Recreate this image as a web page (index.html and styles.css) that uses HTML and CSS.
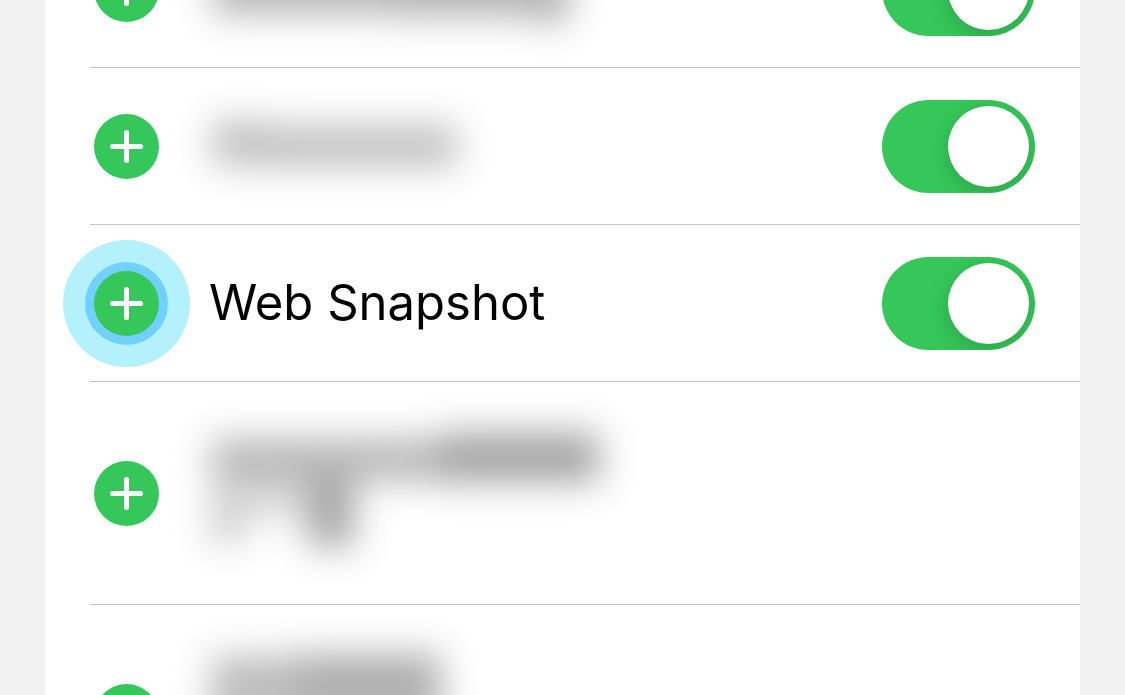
FILE: index.html
```
<!DOCTYPE html>
<html lang="en">
<head>
<meta charset="utf-8">
<meta name="viewport" content="width=device-width, initial-scale=1">
<title>Web Snapshot</title>
<link rel="stylesheet" href="styles.css">
</head>
<body>
<main class="panel">
  <ul class="list">
    <li class="row">
      <button class="add" type="button" aria-label="Add"><svg viewBox="0 0 65 65" aria-hidden="true"><path d="M18.500 32.500H46.500M32.500 18.500V46.500"/></svg></button>
      <div class="label">
        <svg class="redacted" width="420" height="66" aria-hidden="true">
          <rect x="3" y="10" width="180" height="48" fill="#b4b4b4"/>
          <rect x="182" y="8" width="178" height="52" fill="#b2b2b2"/>
          <rect x="325" y="8" width="34" height="58" fill="#aeaeae"/>
        </svg>
      </div>
      <input class="switch" type="checkbox" checked aria-label="Enabled">
    </li>
    <li class="row">
      <button class="add" type="button" aria-label="Add"><svg viewBox="0 0 65 65" aria-hidden="true"><path d="M18.500 32.500H46.500M32.500 18.500V46.500"/></svg></button>
      <div class="label">
        <svg class="redacted" width="420" height="66" aria-hidden="true">
          <rect x="3" y="8" width="52" height="44" fill="#bebebe"/>
          <rect x="54" y="12" width="194" height="42" fill="#c0c0c0"/>
        </svg>
      </div>
      <input class="switch" type="checkbox" checked aria-label="Enabled">
    </li>
    <li class="row">
      <button class="add add-highlight" type="button" aria-label="Add Web Snapshot"><svg viewBox="0 0 65 65" aria-hidden="true"><path d="M18.500 32.500H46.500M32.500 18.500V46.500"/></svg></button>
      <label class="label" for="web-snapshot">Web Snapshot</label>
      <input class="switch" id="web-snapshot" type="checkbox" checked>
    </li>
    <li class="row row-tall">
      <button class="add" type="button" aria-label="Add"><svg viewBox="0 0 65 65" aria-hidden="true"><path d="M18.500 32.500H46.500M32.500 18.500V46.500"/></svg></button>
      <div class="label">
        <svg class="redacted" width="420" height="132" aria-hidden="true">
          <rect x="2" y="12" width="229" height="42" fill="#b6b6b6"/>
          <rect x="230" y="6" width="160" height="49" fill="#a2a2a2"/>
          <rect x="2" y="53" width="98" height="38" fill="#dadada"/>
          <rect x="2" y="76" width="32" height="40" fill="#cacaca"/>
          <rect x="99" y="53" width="46" height="67" fill="#a4a4a4"/>
        </svg>
      </div>
    </li>
    <li class="row row-tall">
      <button class="add" type="button" aria-label="Add"><svg viewBox="0 0 65 65" aria-hidden="true"><path d="M18.500 32.500H46.500M32.500 18.500V46.500"/></svg></button>
      <div class="label">
        <svg class="redacted" width="420" height="132" aria-hidden="true">
          <rect x="2" y="6" width="86" height="55" fill="#bcbcbc"/>
          <rect x="87" y="4" width="145" height="57" fill="#adadad"/>
          <rect x="2" y="60" width="230" height="55" fill="#cccccc"/>
        </svg>
      </div>
    </li>
  </ul>
</main>
</body>
</html>
```
FILE: styles.css
```
* {
  box-sizing: border-box;
}

body {
  margin: 0;
  background: #f2f2f3;
  color: #000;
  font-family: Inter, "Liberation Sans", sans-serif;
  font-size: 49px;
  line-height: 66px;
}

.panel {
  height: 100vh;
  margin: 0 45px;
  padding-left: 45px;
  overflow: hidden;
  background: #fff;
}

/* The list is scrolled part-way through its first row. */
.list {
  margin: -89px 0 0;
  padding: 0;
  list-style: none;
}

.row {
  display: flex;
  align-items: center;
  gap: 50px;
  min-height: 157px;
  padding: 0 45px 0 4px;
  border-bottom: 1px solid #c3c4c5;
}

.row-tall {
  min-height: 223px;
}

.add {
  flex: none;
  width: 65px;
  height: 65px;
  padding: 0;
  border: 0;
  border-radius: 50%;
  background: #35c759;
}

.add svg {
  display: block;
  fill: none;
  stroke: #fff;
  stroke-width: 5;
  stroke-linecap: round;
}

.add-highlight {
  box-shadow: 0 0 0 9px #70d2fa, 0 0 0 31px #b5f1fd;
}

.label {
  flex: 1;
  min-width: 0;
}

.redacted {
  display: block;
  overflow: visible;
  filter: blur(18px);
}

.switch {
  flex: none;
  display: flex;
  appearance: none;
  width: 153px;
  height: 93px;
  margin: 0;
  padding: 6px;
  overflow: hidden;
  border-radius: 47px;
  background: #35c759;
}

.switch::before {
  content: "";
  width: 81px;
  height: 81px;
  border-radius: 50%;
  background: #fff;
  box-shadow: 0 6px 22px rgba(0, 0, 0, 0.18);
}

.switch:checked {
  justify-content: flex-end;
}
```
